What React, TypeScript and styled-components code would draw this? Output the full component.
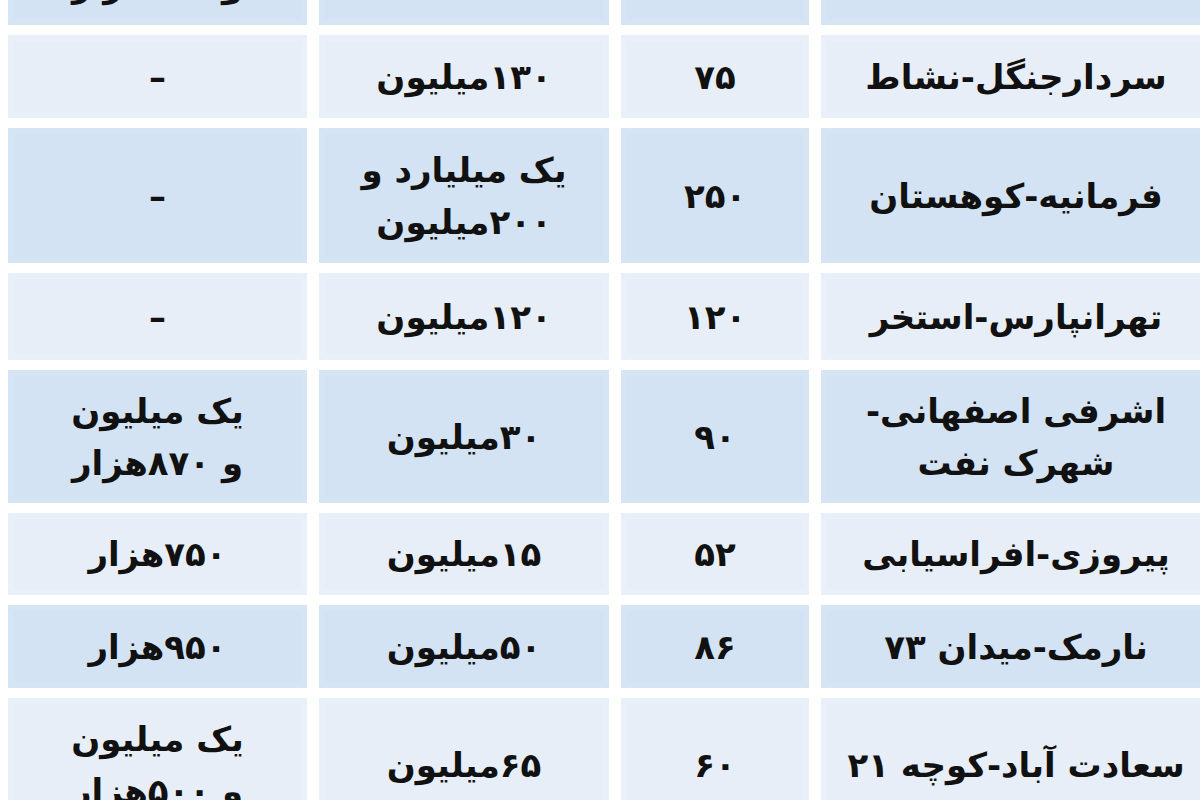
import React from "react";
import styled, { createGlobalStyle } from "styled-components";

const GlobalStyle = createGlobalStyle`
  html, body {
    margin: 0;
    padding: 0;
    background: #ffffff;
    overflow: hidden;
    width: 1200px;
    height: 800px;
  }
  body {
    font-family: "DejaVu Sans", "Noto Sans", sans-serif;
  }
`;

const Page = styled.div`
  width: 1200px;
  height: 800px;
  overflow: hidden;
  background: #ffffff;
`;

const Table = styled.div`
  direction: rtl;
  display: grid;
  grid-template-columns: 390px 188px 290px 299px;
  column-gap: 12px;
  row-gap: 10px;
  width: 1203px;
  margin-left: 8px;
  margin-top: -108px;
`;

const Cell = styled.div<{ $tone: "blue" | "light"; $h: number }>`
  height: ${(p) => p.$h}px;
  background: ${(p) => (p.$tone === "blue" ? "#d3e3f3" : "#e7eef8")};
  box-shadow: inset 0 0 0 6px ${(p) => (p.$tone === "blue" ? "#d6e5f4" : "#e9f0f9")};
  display: flex;
  flex-direction: column;
  align-items: center;
  justify-content: center;
  color: #111111;
  font-family: "DejaVu Sans", "Noto Sans", sans-serif;
  font-weight: 700;
  font-size: 34px;
  line-height: 52px;
  text-align: center;
  white-space: nowrap;
`;

const Line = styled.span`
  display: block;
`;

type Row = { h: number; cells: string[][] };

const rows: Row[] = [
  { h: 133, cells: [[""], [""], [""], ["یک میلیون", "و ۲۰۰هزار"]] },
  { h: 83, cells: [["سردارجنگل-نشاط"], ["۷۵"], ["۱۳۰میلیون"], ["–"]] },
  { h: 135, cells: [["فرمانیه-کوهستان"], ["۲۵۰"], ["یک میلیارد و", "۲۰۰میلیون"], ["–"]] },
  { h: 87, cells: [["تهرانپارس-استخر"], ["۱۲۰"], ["۱۲۰میلیون"], ["–"]] },
  { h: 133, cells: [["اشرفی اصفهانی-", "شهرک نفت"], ["۹۰"], ["۳۰میلیون"], ["یک میلیون", "و ۸۷۰هزار"]] },
  { h: 82, cells: [["پیروزی-افراسیابی"], ["۵۲"], ["۱۵میلیون"], ["۷۵۰هزار"]] },
  { h: 83, cells: [["نارمک-میدان ۷۳"], ["۸۶"], ["۵۰میلیون"], ["۹۵۰هزار"]] },
  { h: 134, cells: [["سعادت آباد-کوچه ۲۱"], ["۶۰"], ["۶۵میلیون"], ["یک میلیون", "و ۵۰۰هزار"]] },
];

export default function App() {
  return (
    <Page>
      <GlobalStyle />
      <Table>
        {rows.map((row, i) =>
          row.cells.map((lines, j) => (
            <Cell key={`${i}-${j}`} $tone={i % 2 === 0 ? "blue" : "light"} $h={row.h}>
              {lines.map((l, k) => (
                <Line key={k}>{l}</Line>
              ))}
            </Cell>
          ))
        )}
      </Table>
    </Page>
  );
}
